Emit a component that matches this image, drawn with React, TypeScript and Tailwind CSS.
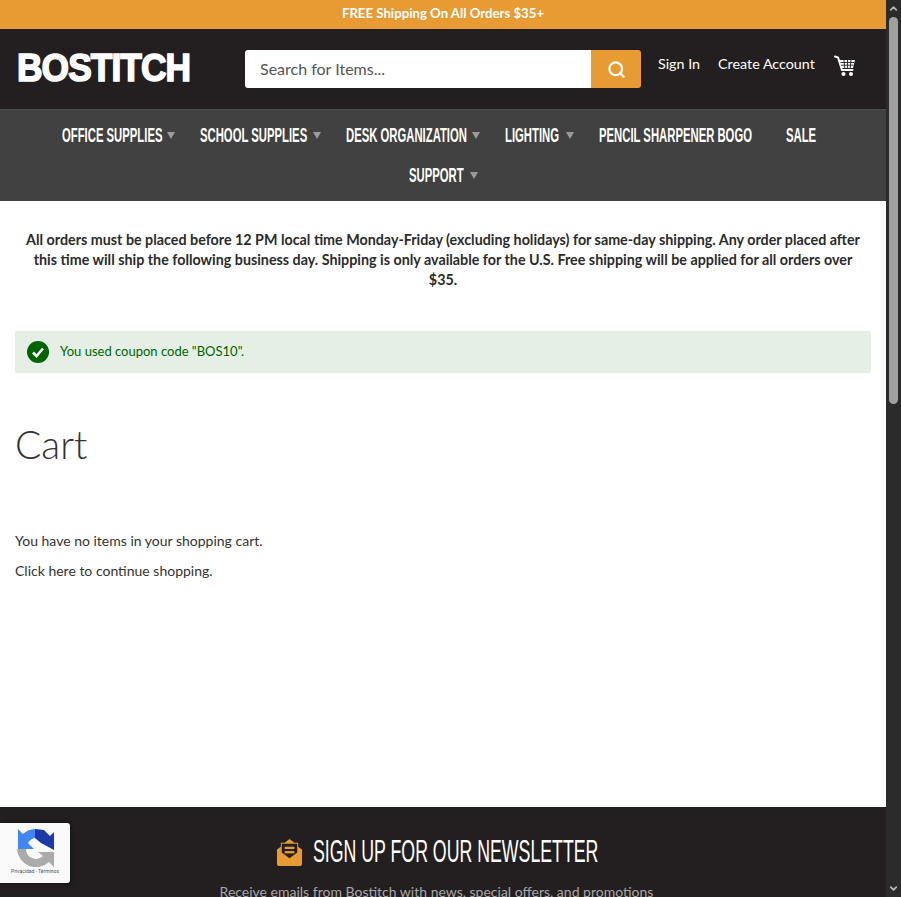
import React from "react";
import { ChevronDown, ChevronUp, Search } from "lucide-react";

const body = "font-['Lato','Noto_Sans',sans-serif]";
const condensed = "font-['Liberation_Sans',sans-serif]";

// no condensed face is installed, so the nav text is squeezed inside a fixed-width box
const NavItem: React.FC<{ label: string; width: string; caret?: boolean; className?: string }> = ({ label, width, caret, className }) => (
  <a className={`flex items-center h-10 text-white whitespace-nowrap ${className ?? ""}`}>
    <span className={`block ${width}`}>
      <span className={`inline-block origin-left scale-x-[0.565] text-[20px] leading-[24px] font-bold ${condensed}`}>{label}</span>
    </span>
    {caret && <span className="ml-[5px] border-x-[4px] border-x-transparent border-t-[7px] border-t-[#9b9b9b]" />}
  </a>
);

const CartIcon = () => (
  <svg width="22" height="22" viewBox="0 0 22 22" fill="none">
    <path d="M1 1.5 L4 2.5 L8 15 H18.5" stroke="#fff" strokeWidth="2" strokeLinecap="round" />
    <path d="M5.5 5 H21 L19 13 H7.5 Z" fill="#fff" />
    <path d="M6.5 7.5 H20 M7 10.2 H19.5 M10 5 L10.8 13 M13.5 5 V13 M17 5 L16.2 13" stroke="#231f20" strokeWidth="0.9" />
    <circle cx="9.5" cy="19" r="2" fill="#fff" />
    <circle cx="17" cy="19" r="2" fill="#fff" />
  </svg>
);

const EnvelopeIcon = () => (
  <svg width="27" height="29" viewBox="0 0 28 30">
    <path d="M14 1 L19 5 H23 V9 L27 12 V27 a2 2 0 0 1 -2 2 H3 a2 2 0 0 1 -2 -2 V12 L5 9 V5 H9 Z" fill="#e89a33" />
    <path d="M6 6 H22 V15 L14 21 L6 15 Z" fill="#231f20" />
    <rect x="9" y="9" width="10" height="2.4" fill="#e89a33" />
    <rect x="9" y="13.5" width="10" height="2.4" fill="#e89a33" />
  </svg>
);

const RecaptchaIcon = () => (
  <svg width="37" height="38" viewBox="0 0 37 38" fill="none">
    <path d="M18 0 L18 9 L24 14 L37 21 V3 L33 7 L27 1 Z" fill="#1c3aa9" />
    <path d="M18 0 A18 18 0 0 0 6 5 L1 0 V20 H17 L11 14 A10 10 0 0 1 18 9 Z" fill="#4285f4" />
    <path d="M0 20 H9 A10 10 0 0 0 26 27 L21 23 H37 V38 L32 33 A19 19 0 0 1 0 20 Z" fill="#ababab" />
  </svg>
);

export default function App() {
  return (
    <div className={`flex h-[897px] overflow-hidden bg-white ${body}`}>
      <div className="relative w-[886px] shrink-0 flex flex-col">
        {/* Promo bar */}
        <div className="h-[29px] pb-[1px] bg-[#e89a33] flex items-center justify-center text-[13.2px] font-bold text-white">
          FREE Shipping On All Orders $35+
        </div>

        {/* Header */}
        <header className="h-[80px] bg-[#231f20] flex items-start">
          <div className="w-[245px] pl-[17px] pt-[17px] flex items-start">
            <span className={`inline-block origin-left scale-x-[0.93] text-[38px] leading-[44px] font-bold text-white tracking-[-1px] [-webkit-text-stroke:1.6px_white] ${condensed}`}>
              BOSTITCH
            </span>
          </div>
          <div className="mt-[21px] flex w-[396px] h-[38px] rounded-[3px] overflow-hidden">
            <div className="flex-1 bg-white pl-[15px] pb-[1px] flex items-center text-[16px] text-[#555]">Search for Items...</div>
            <div className="w-[50px] bg-[#e89a33] flex items-center justify-center">
              <Search className="w-[19px] h-[19px] text-white" strokeWidth={2.75} />
            </div>
          </div>
          <a className="ml-[17px] mt-[26px] text-[14.3px] leading-[18px] text-white">Sign In</a>
          <a className="ml-[18px] mt-[26px] text-[14.3px] leading-[18px] text-white">Create Account</a>
          <div className="ml-[19px] mt-[26px]"><CartIcon /></div>
        </header>

        {/* Main nav */}
        <nav className="h-[92px] bg-[#414141] border-t border-[#4b4b4b] pt-[5px] flex flex-col items-center">
          <div className="flex items-center pr-[10px]">
            <NavItem label="OFFICE SUPPLIES" width="w-[100px]" caret />
            <NavItem label="SCHOOL SUPPLIES" width="w-[108px]" caret className="ml-[25px]" />
            <NavItem label="DESK ORGANIZATION" width="w-[121px]" caret className="ml-[25px]" />
            <NavItem label="LIGHTING" width="w-[56px]" caret className="ml-[25px]" />
            <NavItem label="PENCIL SHARPENER BOGO" width="w-[153px]" className="ml-[25px]" />
            <NavItem label="SALE" width="w-[28px]" className="ml-[34px]" />
          </div>
          <NavItem label="SUPPORT" width="w-[56px]" caret />
        </nav>

        {/* Shipping note */}
        <p className="mt-[29px] mx-[23px] text-center text-[14.3px] leading-[20px] font-bold text-[#2b2b2b]">
          All orders must be placed before 12 PM local time Monday-Friday (excluding holidays) for same-day shipping. Any order placed after this time will ship the following business day. Shipping is only available for the U.S. Free shipping will be applied for all orders over $35.
        </p>

        {/* Coupon message */}
        <div className="mt-[41px] mx-[15px] h-[42px] bg-[#e5efe5] flex items-center pl-[12px] rounded-[2px]">
          <svg width="22" height="22" viewBox="0 0 22 22">
            <circle cx="11" cy="11" r="11" fill="#006400" />
            <path d="M6 11.5 L9.5 15 L16 7.5" stroke="#fff" strokeWidth="2.6" fill="none" />
          </svg>
          <span className="ml-[11px] text-[13px] text-[#006400]">You used coupon code "BOS10".</span>
        </div>

        {/* Cart */}
        <h1 className="mt-[47px] ml-[15px] text-[39px] leading-[48px] font-light text-[#333]">Cart</h1>
        <p className="mt-[63px] ml-[15px] text-[14px] leading-[20px] text-[#333]">You have no items in your shopping cart.</p>
        <p className="mt-[10px] ml-[15px] text-[14px] leading-[20px] text-[#333]">Click here to continue shopping.</p>

        {/* Newsletter */}
        <footer className="mt-auto h-[90px] bg-[#231f20] flex flex-col items-center overflow-hidden pr-[13px]">
          <div className="mt-[29px] flex items-center">
            <EnvelopeIcon />
            <span className="block ml-[10px] w-[285px]">
              <h2 className={`inline-block origin-left scale-x-[0.572] text-[31px] leading-[32px] text-white whitespace-nowrap ${condensed}`}>SIGN UP FOR OUR NEWSLETTER</h2>
            </span>
          </div>
          <p className="mt-[14px] text-[14px] leading-[20px] text-[#a8a6a6] whitespace-nowrap">
            Receive emails from Bostitch with news, special offers, and promotions
          </p>
        </footer>

        {/* reCAPTCHA badge */}
        <div className="absolute left-0 top-[823px] w-[70px] h-[60px] bg-[#f9f9f9] rounded-r-[3px] shadow-[0_0_5px_rgba(0,0,0,0.65)] flex flex-col items-center">
          <div className="mt-[6px]"><RecaptchaIcon /></div>
          <span className="mt-[1px] text-[5px] leading-[6px] text-[#555] font-['Roboto',sans-serif]">Privacidad - Términos</span>
        </div>
      </div>

      {/* Scrollbar */}
      <div className="w-[15px] bg-[#2b2b2b] flex flex-col items-center">
        <ChevronUp className="w-[11px] h-[11px] mt-[3px] text-[#b5b5b5]" strokeWidth={4} />
        <div className="mt-[3px] w-[9px] h-[387px] rounded-[5px] bg-[#9f9f9f]" />
        <ChevronDown className="w-[11px] h-[11px] mt-auto mb-[3px] text-[#b5b5b5]" strokeWidth={4} />
      </div>
    </div>
  );
}
